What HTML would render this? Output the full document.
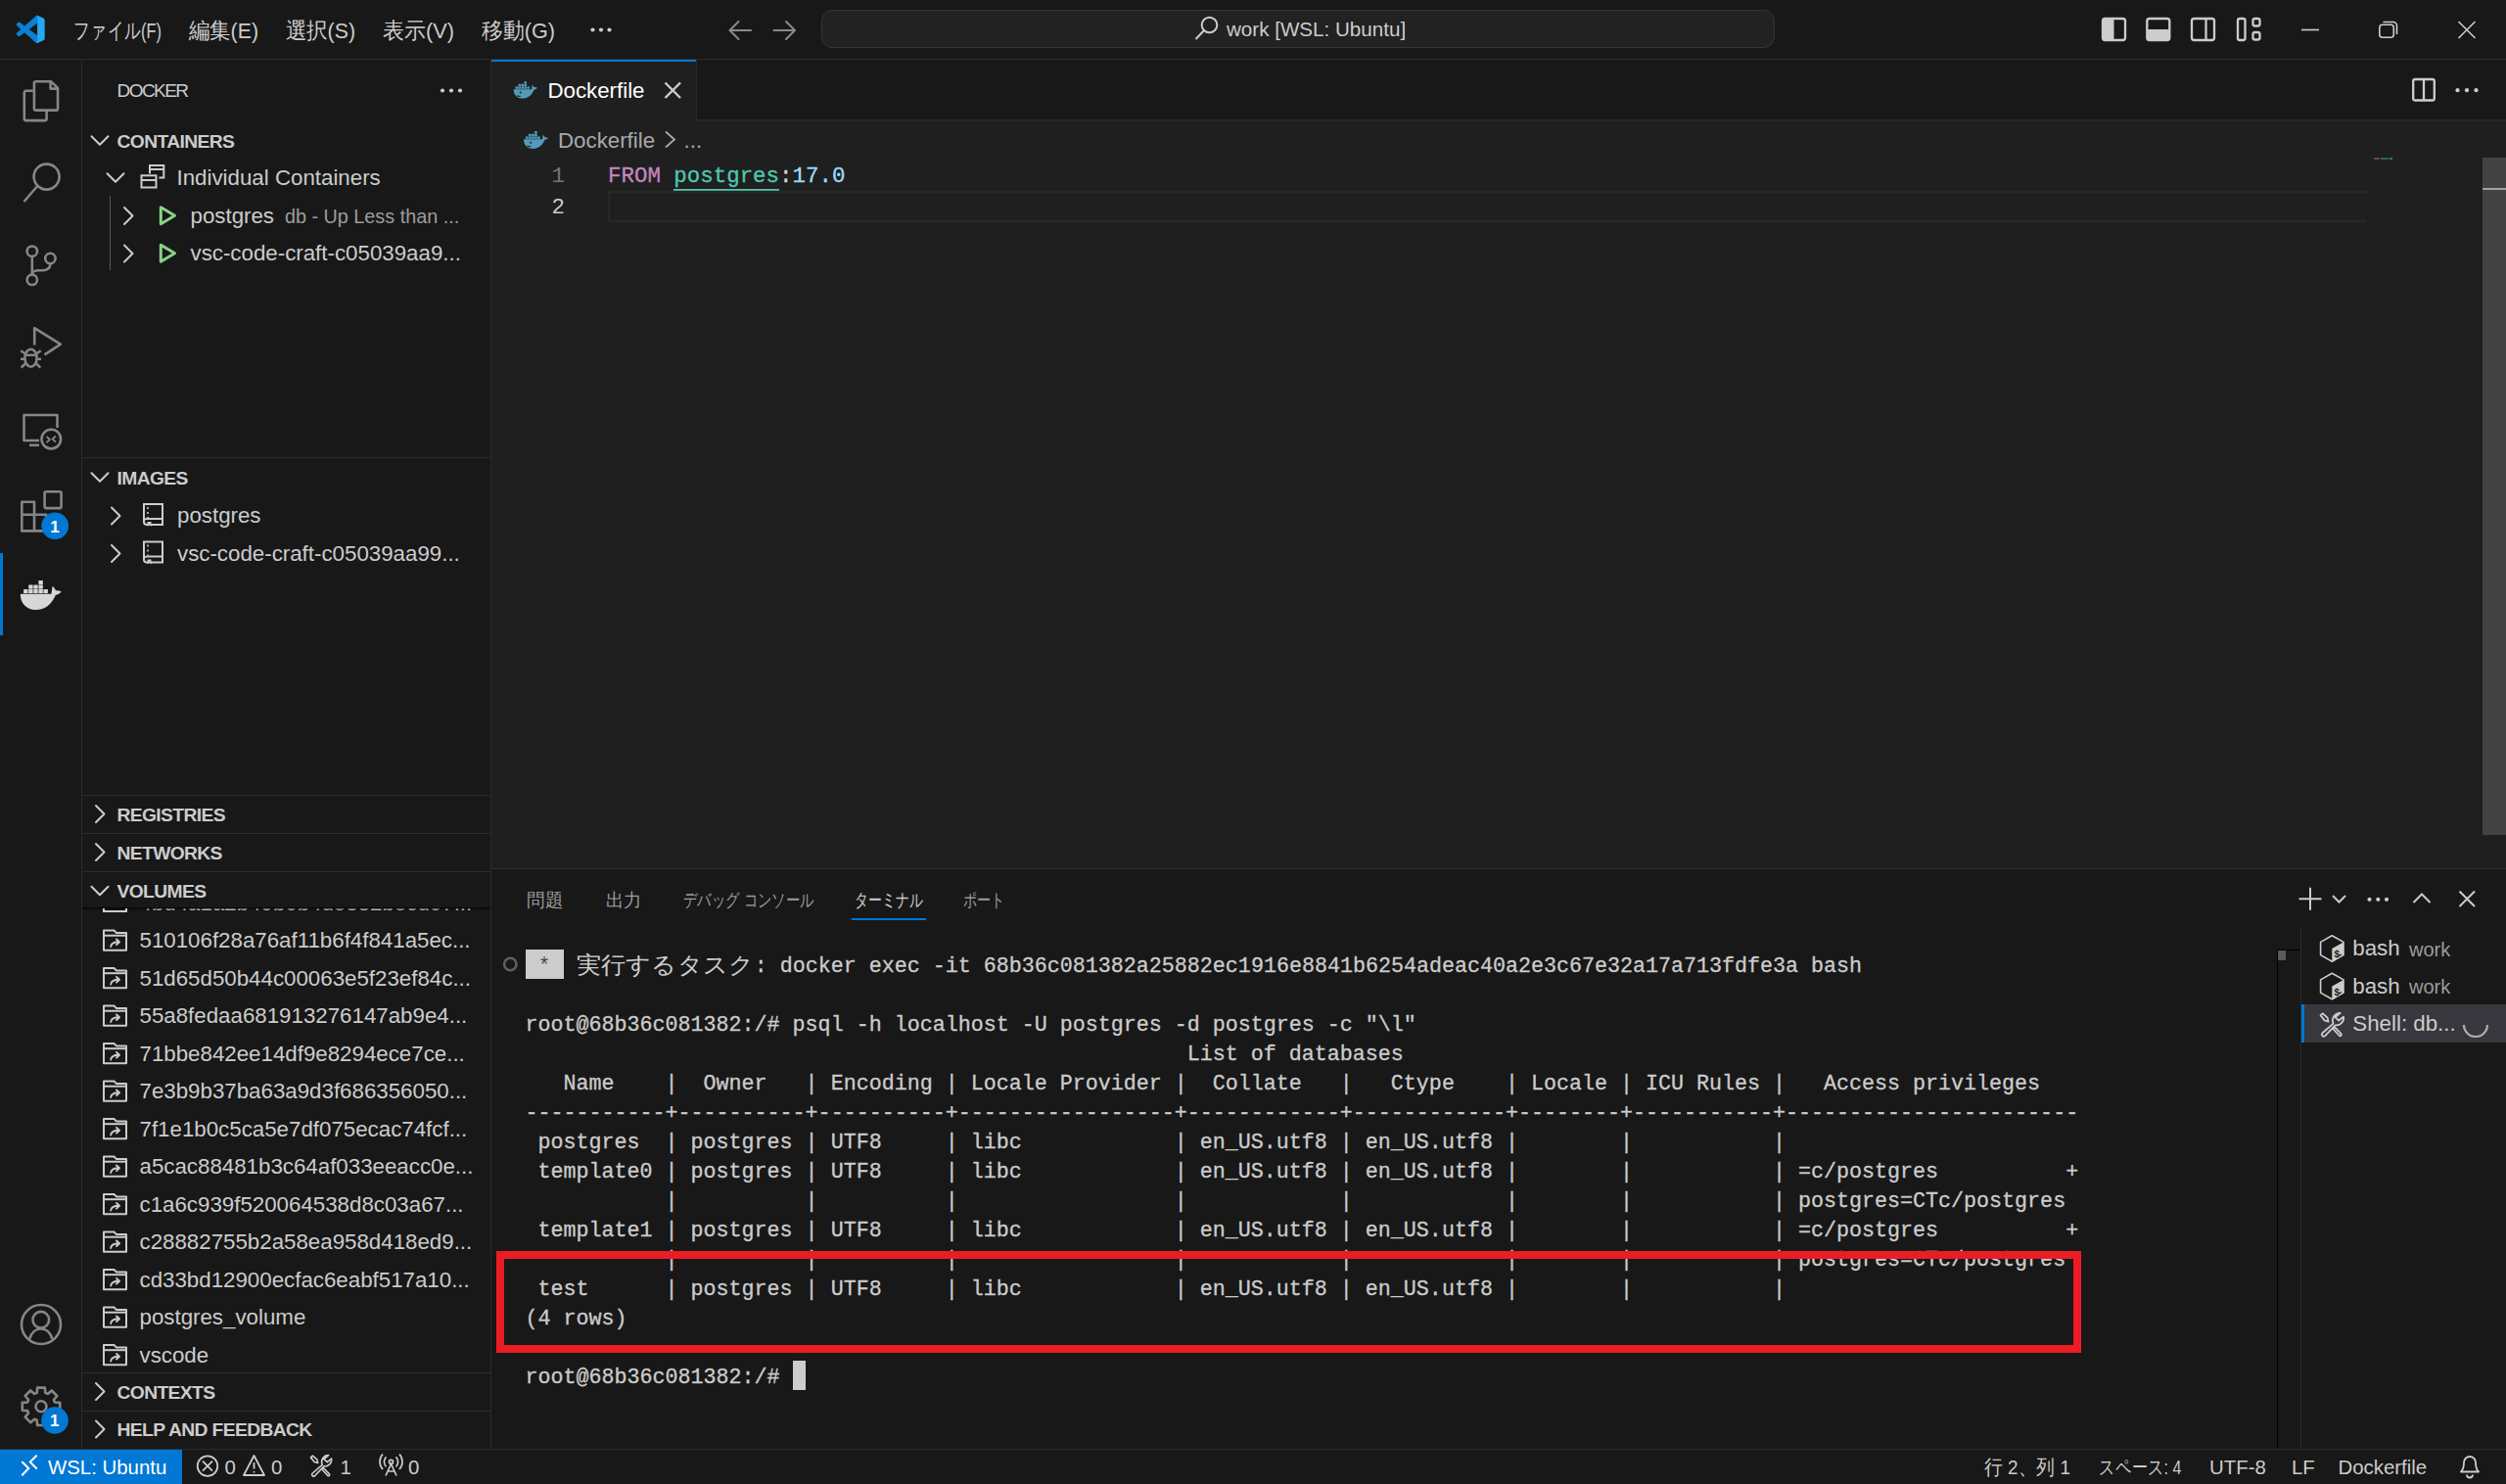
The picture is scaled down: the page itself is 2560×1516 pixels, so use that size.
<!DOCTYPE html><html><head><meta charset="utf-8"><title>VS Code</title><style>
*{margin:0;padding:0;box-sizing:border-box}
html,body{width:2560px;height:1516px;overflow:hidden;background:#181818;font-family:'Liberation Sans', sans-serif}
body>div,#wrap>div{position:absolute}
.t{position:absolute;white-space:pre}
.tm{font-family:'Liberation Mono', monospace;font-size:21.68px;line-height:30px;height:30px;color:#cccccc;-webkit-text-stroke:0.3px #cccccc}
#wrap div{position:absolute}
</style></head><body><div id="wrap"><div style="left:0px;top:0px;width:2560px;height:60px;background:#181818;"></div>
<div style="left:0px;top:60px;width:2560px;height:1px;background:#2b2b2b;"></div>
<div style="left:0px;top:61px;width:83px;height:1419px;background:#181818;"></div>
<div style="left:83px;top:61px;width:1px;height:1419px;background:#2b2b2b;"></div>
<div style="left:84px;top:61px;width:417px;height:1419px;background:#181818;"></div>
<div style="left:501px;top:61px;width:1px;height:1419px;background:#2b2b2b;"></div>
<div style="left:502px;top:61px;width:2058px;height:61px;background:#181818;"></div>
<div style="left:502px;top:122px;width:2058px;height:1px;background:#2b2b2b;"></div>
<div style="left:502px;top:61px;width:209px;height:62px;background:#1f1f1f;"></div>
<div style="left:502px;top:61px;width:209px;height:2px;background:#0078d4;"></div>
<div style="left:711px;top:61px;width:1px;height:61px;background:#2b2b2b;"></div>
<div style="left:502px;top:123px;width:2058px;height:764px;background:#1f1f1f;"></div>
<div style="left:502px;top:887px;width:2058px;height:1px;background:#2b2b2b;"></div>
<div style="left:502px;top:888px;width:2058px;height:592px;background:#181818;"></div>
<div style="left:0px;top:1480px;width:2560px;height:1px;background:#2b2b2b;"></div>
<div style="left:0px;top:1481px;width:2560px;height:35px;background:#181818;"></div>
<div style="left:0px;top:1481px;width:186px;height:35px;background:#0078d4;"></div>
<div style="left:839px;top:10px;width:974px;height:39px;background:#222222;border:1.5px solid #363636;border-radius:11px"></div>
<div class="t" style="left:1253px;top:16.44px;font-size:20.6px;line-height:28.84px;color:#cccccc;font-family:'Liberation Sans', sans-serif;">work [WSL: Ubuntu]</div>
<div style="left:0px;top:565px;width:3px;height:84px;background:#0078d4;"></div>
<div class="t" style="left:119.5px;top:79.72px;font-size:19px;line-height:26.6px;color:#cccccc;font-family:'Liberation Sans', sans-serif;letter-spacing:-1.55px;">DOCKER</div>
<div class="t" style="left:119.5px;top:131.65px;font-size:19.25px;line-height:26.95px;color:#cccccc;font-family:'Liberation Sans', sans-serif;font-weight:700;letter-spacing:-0.62px;">CONTAINERS</div>
<div class="t" style="left:180.5px;top:165.96px;font-size:22.3px;line-height:31.22px;color:#cccccc;font-family:'Liberation Sans', sans-serif;">Individual Containers</div>
<div style="left:112px;top:200px;width:1px;height:76px;background:#585858;"></div>
<div class="t" style="left:194.5px;top:204.96px;font-size:22.3px;line-height:31.22px;color:#cccccc;font-family:'Liberation Sans', sans-serif;">postgres</div>
<div class="t" style="left:291px;top:207.58px;font-size:19.8px;line-height:27.72px;color:#9d9d9d;font-family:'Liberation Sans', sans-serif;">db - Up Less than ...</div>
<div class="t" style="left:194.5px;top:243.46px;font-size:22.3px;line-height:31.22px;color:#cccccc;font-family:'Liberation Sans', sans-serif;">vsc-code-craft-c05039aa9...</div>
<div style="left:84px;top:467px;width:417px;height:1px;background:#2b2b2b;"></div>
<div class="t" style="left:119.5px;top:475.65px;font-size:19.25px;line-height:26.95px;color:#cccccc;font-family:'Liberation Sans', sans-serif;font-weight:700;letter-spacing:-0.62px;">IMAGES</div>
<div class="t" style="left:181px;top:511.46px;font-size:22.3px;line-height:31.22px;color:#cccccc;font-family:'Liberation Sans', sans-serif;">postgres</div>
<div class="t" style="left:181px;top:549.96px;font-size:22.3px;line-height:31.22px;color:#cccccc;font-family:'Liberation Sans', sans-serif;">vsc-code-craft-c05039aa99...</div>
<div style="left:84px;top:812px;width:417px;height:1px;background:#2b2b2b;"></div>
<div class="t" style="left:119.5px;top:819.65px;font-size:19.25px;line-height:26.95px;color:#cccccc;font-family:'Liberation Sans', sans-serif;font-weight:700;letter-spacing:-0.62px;">REGISTRIES</div>
<div style="left:84px;top:851px;width:417px;height:1px;background:#2b2b2b;"></div>
<div class="t" style="left:119.5px;top:858.65px;font-size:19.25px;line-height:26.95px;color:#cccccc;font-family:'Liberation Sans', sans-serif;font-weight:700;letter-spacing:-0.62px;">NETWORKS</div>
<div style="left:84px;top:889.5px;width:417px;height:1px;background:#2b2b2b;"></div>
<div style="left:84px;top:927.5px;width:417px;height:474.5px;overflow:hidden">
<div class="t" style="left:58.5px;top:-20.53px;font-size:22.3px;line-height:31.2px;color:#cccccc">4bd4a1a2b49b0b4d5832b5cd07...</div>
<div class="t" style="left:58.5px;top:17.97px;font-size:22.3px;line-height:31.2px;color:#cccccc">510106f28a76af11b6f4f841a5ec...</div>
<div class="t" style="left:58.5px;top:56.47px;font-size:22.3px;line-height:31.2px;color:#cccccc">51d65d50b44c00063e5f23ef84c...</div>
<div class="t" style="left:58.5px;top:94.97px;font-size:22.3px;line-height:31.2px;color:#cccccc">55a8fedaa681913276147ab9e4...</div>
<div class="t" style="left:58.5px;top:133.47px;font-size:22.3px;line-height:31.2px;color:#cccccc">71bbe842ee14df9e8294ece7ce...</div>
<div class="t" style="left:58.5px;top:171.97px;font-size:22.3px;line-height:31.2px;color:#cccccc">7e3b9b37ba63a9d3f686356050...</div>
<div class="t" style="left:58.5px;top:210.47px;font-size:22.3px;line-height:31.2px;color:#cccccc">7f1e1b0c5ca5e7df075ecac74fcf...</div>
<div class="t" style="left:58.5px;top:248.97px;font-size:22.3px;line-height:31.2px;color:#cccccc">a5cac88481b3c64af033eeacc0e...</div>
<div class="t" style="left:58.5px;top:287.47px;font-size:22.3px;line-height:31.2px;color:#cccccc">c1a6c939f520064538d8c03a67...</div>
<div class="t" style="left:58.5px;top:325.97px;font-size:22.3px;line-height:31.2px;color:#cccccc">c28882755b2a58ea958d418ed9...</div>
<div class="t" style="left:58.5px;top:364.47px;font-size:22.3px;line-height:31.2px;color:#cccccc">cd33bd12900ecfac6eabf517a10...</div>
<div class="t" style="left:58.5px;top:402.97px;font-size:22.3px;line-height:31.2px;color:#cccccc">postgres_volume</div>
<div class="t" style="left:58.5px;top:441.47px;font-size:22.3px;line-height:31.2px;color:#cccccc">vscode</div>
</div>
<div style="left:84px;top:890.5px;width:417px;height:37px;background:#181818;"></div>
<div class="t" style="left:119.5px;top:898.15px;font-size:19.25px;line-height:26.95px;color:#cccccc;font-family:'Liberation Sans', sans-serif;font-weight:700;letter-spacing:-0.62px;">VOLUMES</div>
<div style="left:84px;top:927px;width:417px;height:3px;background:linear-gradient(#000000cc,#00000000);"></div>
<div style="left:84px;top:1402px;width:417px;height:1px;background:#2b2b2b;"></div>
<div class="t" style="left:119.5px;top:1409.65px;font-size:19.25px;line-height:26.95px;color:#cccccc;font-family:'Liberation Sans', sans-serif;font-weight:700;letter-spacing:-0.62px;">CONTEXTS</div>
<div style="left:84px;top:1440.5px;width:417px;height:1px;background:#2b2b2b;"></div>
<div class="t" style="left:119.5px;top:1448.15px;font-size:19.25px;line-height:26.95px;color:#cccccc;font-family:'Liberation Sans', sans-serif;font-weight:700;letter-spacing:-0.62px;">HELP AND FEEDBACK</div>
<div class="t" style="left:559.4px;top:77.36px;font-size:22.3px;line-height:31.22px;color:#ffffff;font-family:'Liberation Sans', sans-serif;">Dockerfile</div>
<div class="t" style="left:570px;top:127.66px;font-size:22.3px;line-height:31.22px;color:#a9a9a9;font-family:'Liberation Sans', sans-serif;">Dockerfile</div>
<div class="t" style="left:698.5px;top:127.66px;font-size:22.3px;line-height:31.22px;color:#a9a9a9;font-family:'Liberation Sans', sans-serif;">...</div>
<div class="t" style="left:563.5px;top:164.61px;font-size:22.45px;line-height:31.43px;color:#6e7681;font-family:'Liberation Mono', monospace;">1</div>
<div class="t" style="left:563.5px;top:197.11px;font-size:22.45px;line-height:31.43px;color:#cccccc;font-family:'Liberation Mono', monospace;">2</div>
<div class="t" style="left:621px;top:164.61px;font-family:'Liberation Mono', monospace;font-size:22.45px;line-height:31.43px;white-space:pre;-webkit-text-stroke:0.3px currentColor"><span style="color:#c586c0;-webkit-text-stroke:0.3px #c586c0">FROM</span> <span style="color:#4ec9b0;-webkit-text-stroke:0.3px #4ec9b0">postgres</span><span style="color:#d4d4d4;-webkit-text-stroke:0.3px #d4d4d4">:</span><span style="color:#9cdcfe;-webkit-text-stroke:0.3px #9cdcfe">17.0</span></div>
<div style="left:688.3px;top:193px;width:107.8px;height:2.2px;background:#4ec9b0;"></div>
<div style="left:2425px;top:161px;width:6px;height:1.5px;background:#c586c066;"></div>
<div style="left:2432px;top:161px;width:8px;height:1.5px;background:#4ec9b066;"></div>
<div style="left:2441px;top:161px;width:3px;height:1.5px;background:#9cdcfe66;"></div>
<div style="left:2536px;top:161px;width:24px;height:692px;background:#434343;"></div>
<div style="left:2536px;top:192px;width:24px;height:2px;background:#a0a0a0;"></div>
<div style="left:870px;top:937.5px;width:76px;height:2px;background:#0078d4;"></div>
<div style="left:2350px;top:948px;width:1px;height:532px;background:#2b2b2b;"></div>
<div style="left:2351px;top:1026px;width:209px;height:38.5px;background:#37373d;"></div>
<div style="left:2351px;top:1026px;width:3px;height:38.5px;background:#0078d4;"></div>
<div class="t" style="left:2403.3px;top:953.46px;font-size:22.3px;line-height:31.22px;color:#cccccc;font-family:'Liberation Sans', sans-serif;">bash</div>
<div class="t" style="left:2461px;top:955.87px;font-size:20px;line-height:28.0px;color:#9d9d9d;font-family:'Liberation Sans', sans-serif;">work</div>
<div class="t" style="left:2403.3px;top:991.96px;font-size:22.3px;line-height:31.22px;color:#cccccc;font-family:'Liberation Sans', sans-serif;">bash</div>
<div class="t" style="left:2461px;top:994.37px;font-size:20px;line-height:28.0px;color:#9d9d9d;font-family:'Liberation Sans', sans-serif;">work</div>
<div class="t" style="left:2403.3px;top:1029.96px;font-size:22.3px;line-height:31.22px;color:#cccccc;font-family:'Liberation Sans', sans-serif;">Shell: db...</div>
<div style="left:2326px;top:970px;width:1px;height:510px;background:#000000;"></div>
<div style="left:2326px;top:970px;width:24px;height:1px;background:#000000;"></div>
<div style="left:2327px;top:971px;width:8px;height:10px;background:#5a5a5a;"></div>
<div class="t tm" style="left:536.5px;top:1032.5px">root@68b36c081382:/# psql -h localhost -U postgres -d postgres -c "\l"</div>
<div class="t tm" style="left:536.5px;top:1062.5px">                                                    List of databases</div>
<div class="t tm" style="left:536.5px;top:1092.5px">   Name    |  Owner   | Encoding | Locale Provider |  Collate   |   Ctype    | Locale | ICU Rules |   Access privileges   </div>
<div class="t tm" style="left:536.5px;top:1122.5px">-----------+----------+----------+-----------------+------------+------------+--------+-----------+-----------------------</div>
<div class="t tm" style="left:536.5px;top:1152.5px"> postgres  | postgres | UTF8     | libc            | en_US.utf8 | en_US.utf8 |        |           | </div>
<div class="t tm" style="left:536.5px;top:1182.5px"> template0 | postgres | UTF8     | libc            | en_US.utf8 | en_US.utf8 |        |           | =c/postgres          +</div>
<div class="t tm" style="left:536.5px;top:1212.5px">           |          |          |                 |            |            |        |           | postgres=CTc/postgres</div>
<div class="t tm" style="left:536.5px;top:1242.5px"> template1 | postgres | UTF8     | libc            | en_US.utf8 | en_US.utf8 |        |           | =c/postgres          +</div>
<div class="t tm" style="left:536.5px;top:1272.5px">           |          |          |                 |            |            |        |           | postgres=CTc/postgres</div>
<div class="t tm" style="left:536.5px;top:1302.5px"> test      | postgres | UTF8     | libc            | en_US.utf8 | en_US.utf8 |        |           | </div>
<div class="t tm" style="left:536.5px;top:1332.5px">(4 rows)</div>
<div class="t tm" style="left:536.5px;top:1392.5px">root@68b36c081382:/# </div>
<div style="left:536.5px;top:970px;width:39px;height:30px;background:#cccccc;"></div>
<div class="t tm" style="left:549.51px;top:972.5px;color:#1f1f1f">*</div>
<div class="t tm" style="left:770.6800000000001px;top:972.5px">: docker exec -it 68b36c081382a25882ec1916e8841b6254adeac40a2e3c67e32a17a713fdfe3a bash</div>
<div style="left:809.7px;top:1389.5px;width:13.6px;height:30px;background:#cccccc;"></div>
<div style="left:507px;top:1277.5px;width:1619px;height:104.5px;border:8.3px solid #ec1c24;box-sizing:border-box"></div>
<div class="t" style="left:49px;top:1484.95px;font-size:20.4px;line-height:28.56px;color:#ffffff;font-family:'Liberation Sans', sans-serif;">WSL: Ubuntu</div>
<div class="t" style="left:229.5px;top:1484.95px;font-size:20.4px;line-height:28.56px;color:#cccccc;font-family:'Liberation Sans', sans-serif;">0</div>
<div class="t" style="left:277px;top:1484.95px;font-size:20.4px;line-height:28.56px;color:#cccccc;font-family:'Liberation Sans', sans-serif;">0</div>
<div class="t" style="left:347.5px;top:1484.95px;font-size:20.4px;line-height:28.56px;color:#cccccc;font-family:'Liberation Sans', sans-serif;">1</div>
<div class="t" style="left:417px;top:1484.95px;font-size:20.4px;line-height:28.56px;color:#cccccc;font-family:'Liberation Sans', sans-serif;">0</div>
<div class="t" style="left:2257px;top:1484.95px;font-size:20.4px;line-height:28.56px;color:#cccccc;font-family:'Liberation Sans', sans-serif;">UTF-8</div>
<div class="t" style="left:2341px;top:1484.95px;font-size:20.4px;line-height:28.56px;color:#cccccc;font-family:'Liberation Sans', sans-serif;">LF</div>
<div class="t" style="left:2388.5px;top:1484.95px;font-size:20.4px;line-height:28.56px;color:#cccccc;font-family:'Liberation Sans', sans-serif;">Dockerfile</div></div><svg width="2560" height="1516" viewBox="0 0 2560 1516" style="position:absolute;left:0;top:0;pointer-events:none"><g transform="translate(16.6,15.8) scale(0.289,0.282)"><path fill="#0b80d4" d="M96.46 10.8L75.86.9a6.24 6.24 0 0 0-7.12 1.21L29.35 38.04 12.19 25.01a4.16 4.16 0 0 0-5.32.24l-5.5 5a4.16 4.16 0 0 0 0 6.16L16.25 50 1.37 63.58a4.16 4.16 0 0 0 0 6.16l5.5 5a4.16 4.16 0 0 0 5.32.24l17.16-13.02 39.39 35.93a6.24 6.24 0 0 0 7.12 1.21l20.6-9.92A6.25 6.25 0 0 0 100 83.6V16.4a6.25 6.25 0 0 0-3.54-5.6zM75.02 72.7L45.11 50l29.91-22.7z"/><path fill="#27a9f1" d="M75.86 99.13a6.24 6.24 0 0 1-7.12-1.21c2.31 2.31 6.26.67 6.26-2.6V4.68c0-3.27-3.95-4.91-6.26-2.6a6.24 6.24 0 0 1 7.12-1.21l20.6 9.91A6.25 6.25 0 0 1 100 16.4v67.2a6.25 6.25 0 0 1-3.54 5.63z"/></g>
<text x="75" y="38.5" font-family="'Liberation Sans', sans-serif" font-size="22.75" fill="#cccccc" font-weight="400" textLength="90" lengthAdjust="spacingAndGlyphs" xml:space="preserve">ファイル(F)</text>
<text x="192.5" y="38.5" font-family="'Liberation Sans', sans-serif" font-size="22.75" fill="#cccccc" font-weight="400" textLength="71.5" lengthAdjust="spacingAndGlyphs" xml:space="preserve">編集(E)</text>
<text x="291.5" y="38.5" font-family="'Liberation Sans', sans-serif" font-size="22.75" fill="#cccccc" font-weight="400" textLength="71.5" lengthAdjust="spacingAndGlyphs" xml:space="preserve">選択(S)</text>
<text x="391" y="38.5" font-family="'Liberation Sans', sans-serif" font-size="22.75" fill="#cccccc" font-weight="400" textLength="73" lengthAdjust="spacingAndGlyphs" xml:space="preserve">表示(V)</text>
<text x="492" y="38.5" font-family="'Liberation Sans', sans-serif" font-size="22.75" fill="#cccccc" font-weight="400" textLength="75" lengthAdjust="spacingAndGlyphs" xml:space="preserve">移動(G)</text>
<circle cx="605.5" cy="30.5" r="2.1" fill="#cccccc"/>
<circle cx="614" cy="30.5" r="2.1" fill="#cccccc"/>
<circle cx="622.5" cy="30.5" r="2.1" fill="#cccccc"/>
<g stroke="#8a8a8a" stroke-width="2" fill="none" stroke-linecap="round"><path d="M745.5 31H767M745.5 31L754.5 22M745.5 31L754.5 40"/><path d="M812 31H790.5M812 31L803 22M812 31L803 40"/></g>
<g stroke="#cccccc" stroke-width="2" fill="none"><circle cx="1235.5" cy="25.5" r="7.8"/><path d="M1229.8 31.2L1221.5 40"/></g>
<g stroke="#cccccc" stroke-width="2.3" fill="none"><rect x="2148" y="19" width="23" height="22" rx="2.5"/><rect x="2193.3" y="19" width="23" height="22" rx="2.5"/><rect x="2239" y="19" width="23" height="22" rx="2.5"/><path d="M2253.5 19V41"/><rect x="2286" y="19" width="7.5" height="22" rx="2"/><rect x="2301.5" y="19" width="7" height="7.5" rx="2"/><rect x="2301.5" y="33" width="7" height="7.5" rx="2"/></g>
<rect x="2148" y="19" width="11.5" height="22" rx="2" fill="#cccccc"/>
<rect x="2193.3" y="30" width="23" height="11" rx="2" fill="#cccccc"/>
<g stroke="#cccccc" stroke-width="1.6" fill="none"><path d="M2351 30.5H2369"/><rect x="2430.8" y="25.3" width="14.5" height="13" rx="3"/><path d="M2434.5 22.5H2444.5A4 4 0 0 1 2448.5 26.5V35"/><path d="M2511.5 22L2528.5 39M2528.5 22L2511.5 39"/></g>
<g stroke="#868686" stroke-width="2.6" fill="none" stroke-linejoin="round"><path d="M33.8 92.8H26.3A2.2 2.2 0 0 0 24.8 94.8V121.7A1.6 1.6 0 0 0 26.6 123.1H46.1A1.6 1.6 0 0 0 47.6 121.6V114"/><path d="M36.7 83.3H52.3L59 90V110.9A1.7 1.7 0 0 1 57.4 112.6H36.6A1.7 1.7 0 0 1 34.9 110.9V85A1.7 1.7 0 0 1 36.7 83.3Z"/><path d="M51.6 83.5V90.6H58.8"/></g>
<g stroke="#868686" stroke-width="2.6" fill="none" stroke-linejoin="round"><circle cx="47.6" cy="180.6" r="13"/><path d="M38.3 190L24.5 206"/></g>
<g stroke="#868686" stroke-width="2.6" fill="none" stroke-linejoin="round"><circle cx="32.8" cy="256.7" r="5.2"/><circle cx="51.4" cy="264" r="5.2"/><circle cx="32.8" cy="285.8" r="5.2"/><path d="M32.8 262V280.5M51.4 269.3C51.4 274 49 276 44 276.3H39C35 276.5 32.8 278 32.8 280.5"/></g>
<g stroke="#868686" stroke-width="2.6" fill="none" stroke-linejoin="round"><path d="M35.2 352.5V335.2L61.8 351.7L45.5 362.3"/><ellipse cx="31.5" cy="365.7" rx="6.1" ry="9"/><path d="M25.6 362.8H37.4M21.3 358.3L26 361.5M41.7 358.3L37 361.5M21 366.8H25.4M37.6 366.8H42M21.6 375.5L26 371.5M41.4 375.5L37 371.5" stroke-width="2.4"/></g>
<g stroke="#868686" stroke-width="2.6" fill="none" stroke-linejoin="round"><path d="M40 450H24.5V424H58.5V437"/><path d="M30 454.8H40"/><circle cx="52.3" cy="448.6" r="9.8"/><path d="M47.5 446L51 449L47.5 452M57 445.5L53.5 448.5L57 451.5" stroke-width="1.8"/></g>
<g stroke="#868686" stroke-width="2.6" fill="none" stroke-linejoin="round"><path d="M22.3 512.8H35V525.8H47.2V542.4H22.3Z"/><path d="M22.3 525.8H35V542.4"/><rect x="45.6" y="502.3" width="17" height="16.8" rx="1.5"/></g>
<circle cx="56.2" cy="537.2" r="13.8" fill="#0078d4"/>
<text x="51.2" y="543.6" font-family="'Liberation Sans', sans-serif" font-size="17" fill="#ffffff" font-weight="700" textLength="9.5" lengthAdjust="spacingAndGlyphs" xml:space="preserve">1</text>
<g transform="translate(20.9,593) scale(1.0)" fill="#d7d7d7"><path d="M0 13.7H31.5C32.1 11 32.3 8 32.8 5.8C34.6 7.5 35.6 9 36.2 10.3C38.1 10 40.1 10.5 41.8 11.5C40.1 13.5 38.1 14.5 36 14.7C32.1 24 25.1 30 15.4 30C6.1 30 0.1 23 0 15Z"/><rect x="3.2" y="9" width="4.4" height="4.1"/><rect x="8.3" y="9" width="4.4" height="4.1"/><rect x="13.4" y="9" width="4.4" height="4.1"/><rect x="18.5" y="9" width="4.4" height="4.1"/><rect x="23.6" y="9" width="4.4" height="4.1"/><rect x="8.3" y="4.5" width="4.4" height="4.1"/><rect x="13.4" y="4.5" width="4.4" height="4.1"/><rect x="18.5" y="4.5" width="4.4" height="4.1"/><rect x="18.5" y="0" width="4.4" height="4.1"/></g>
<g stroke="#868686" stroke-width="2.6" fill="none" stroke-linejoin="round"><circle cx="42" cy="1353" r="20"/><circle cx="41.8" cy="1348.2" r="8.3"/><path d="M30.2 1367.8C32 1361.5 36.5 1357.5 41.8 1357.5S51.5 1361.5 53.4 1367.8"/></g>
<g stroke="#868686" stroke-width="2.6" fill="none" stroke-linejoin="round"><path d="M61.21 1432.91 L61.21 1440.69 L55.95 1441.11 L54.91 1443.61 L58.34 1447.63 L52.83 1453.14 L48.81 1449.71 L46.31 1450.75 L45.89 1456.01 L38.11 1456.01 L37.69 1450.75 L35.19 1449.71 L31.17 1453.14 L25.66 1447.63 L29.09 1443.61 L28.05 1441.11 L22.79 1440.69 L22.79 1432.91 L28.05 1432.49 L29.09 1429.99 L25.66 1425.97 L31.17 1420.46 L35.19 1423.89 L37.69 1422.85 L38.11 1417.59 L45.89 1417.59 L46.31 1422.85 L48.81 1423.89 L52.83 1420.46 L58.34 1425.97 L54.91 1429.99 L55.95 1432.49Z"/><circle cx="42" cy="1436.8" r="5.5"/></g>
<circle cx="56" cy="1451" r="13.8" fill="#0078d4"/>
<text x="51" y="1457.4" font-family="'Liberation Sans', sans-serif" font-size="17" fill="#ffffff" font-weight="700" textLength="9.5" lengthAdjust="spacingAndGlyphs" xml:space="preserve">1</text>
<circle cx="452" cy="92.5" r="2.1" fill="#cccccc"/>
<circle cx="461" cy="92.5" r="2.1" fill="#cccccc"/>
<circle cx="470" cy="92.5" r="2.1" fill="#cccccc"/>
<path stroke="#cccccc" stroke-width="2" fill="none" stroke-linecap="round" stroke-linejoin="round" d="M93.5 139.2L102.0 147.8L110.5 139.2"/>
<path stroke="#cccccc" stroke-width="2" fill="none" stroke-linecap="round" stroke-linejoin="round" d="M109.5 177.2L118.0 185.8L126.5 177.2"/>
<g stroke="#cccccc" stroke-width="2" fill="none"><rect x="144.5" y="179.3" width="15" height="12.2"/><path d="M144.5 184H159.5"/><path d="M153 177.5V169H167.3V181.5H162.5M153 173H167.3"/></g>
<path stroke="#cccccc" stroke-width="2" fill="none" stroke-linecap="round" stroke-linejoin="round" d="M127 212.0L135.5 220.5L127 229.0"/>
<path d="M164.3 211.7L178.5 220.2L164.3 228.7Z" stroke="#89d185" stroke-width="3" fill="none" stroke-linejoin="round"/>
<path stroke="#cccccc" stroke-width="2" fill="none" stroke-linecap="round" stroke-linejoin="round" d="M127 250.5L135.5 259L127 267.5"/>
<path d="M164.3 250.2L178.5 258.7L164.3 267.2Z" stroke="#89d185" stroke-width="3" fill="none" stroke-linejoin="round"/>
<path stroke="#cccccc" stroke-width="2" fill="none" stroke-linecap="round" stroke-linejoin="round" d="M93.5 483.2L102.0 491.8L110.5 483.2"/>
<path stroke="#cccccc" stroke-width="2" fill="none" stroke-linecap="round" stroke-linejoin="round" d="M114 518.5L122.5 527L114 535.5"/>
<g stroke="#cccccc" stroke-width="2" fill="none"><path d="M147 515H166V536H150A3 3 0 0 1 147 533Z"/><path d="M147 532A3 3 0 0 1 150 530H166"/><path d="M151 518V520M151 523V525M151 528V529" stroke-width="1.6"/></g>
<path d="M150.5 533V538L152.5 536L154.5 538V533Z" fill="#cccccc"/>
<path stroke="#cccccc" stroke-width="2" fill="none" stroke-linecap="round" stroke-linejoin="round" d="M114 557.0L122.5 565.5L114 574.0"/>
<g stroke="#cccccc" stroke-width="2" fill="none"><path d="M147 553.5H166V574.5H150A3 3 0 0 1 147 571.5Z"/><path d="M147 570.5A3 3 0 0 1 150 568.5H166"/><path d="M151 556.5V558.5M151 561.5V563.5M151 566.5V567.5" stroke-width="1.6"/></g>
<path d="M150.5 571.5V576.5L152.5 574.5L154.5 576.5V571.5Z" fill="#cccccc"/>
<path stroke="#cccccc" stroke-width="2" fill="none" stroke-linecap="round" stroke-linejoin="round" d="M98 823.0L106.5 831.5L98 840.0"/>
<path stroke="#cccccc" stroke-width="2" fill="none" stroke-linecap="round" stroke-linejoin="round" d="M98 862.0L106.5 870.5L98 879.0"/>
<g stroke="#cccccc" stroke-width="2" fill="none" stroke-linejoin="round"><path d="M106 970.7V950.5H116.5L119 953.1H129V970.7Z"/><path d="M106 955.7H129"/><path d="M113.2 967.0C113.5 963.5 116 962.3 121.5 962.3M119 959.5L122 962.3L119 965.1" stroke-width="1.9" stroke-linecap="round"/></g>
<g stroke="#cccccc" stroke-width="2" fill="none" stroke-linejoin="round"><path d="M106 1009.2V989.0H116.5L119 991.6H129V1009.2Z"/><path d="M106 994.2H129"/><path d="M113.2 1005.5C113.5 1002.0 116 1000.8 121.5 1000.8M119 998.0L122 1000.8L119 1003.6" stroke-width="1.9" stroke-linecap="round"/></g>
<g stroke="#cccccc" stroke-width="2" fill="none" stroke-linejoin="round"><path d="M106 1047.7V1027.5H116.5L119 1030.1H129V1047.7Z"/><path d="M106 1032.7H129"/><path d="M113.2 1044.0C113.5 1040.5 116 1039.3 121.5 1039.3M119 1036.5L122 1039.3L119 1042.1" stroke-width="1.9" stroke-linecap="round"/></g>
<g stroke="#cccccc" stroke-width="2" fill="none" stroke-linejoin="round"><path d="M106 1086.2V1066.0H116.5L119 1068.6H129V1086.2Z"/><path d="M106 1071.2H129"/><path d="M113.2 1082.5C113.5 1079.0 116 1077.8 121.5 1077.8M119 1075.0L122 1077.8L119 1080.6" stroke-width="1.9" stroke-linecap="round"/></g>
<g stroke="#cccccc" stroke-width="2" fill="none" stroke-linejoin="round"><path d="M106 1124.7V1104.5H116.5L119 1107.1H129V1124.7Z"/><path d="M106 1109.7H129"/><path d="M113.2 1121.0C113.5 1117.5 116 1116.3 121.5 1116.3M119 1113.5L122 1116.3L119 1119.1" stroke-width="1.9" stroke-linecap="round"/></g>
<g stroke="#cccccc" stroke-width="2" fill="none" stroke-linejoin="round"><path d="M106 1163.2V1143.0H116.5L119 1145.6H129V1163.2Z"/><path d="M106 1148.2H129"/><path d="M113.2 1159.5C113.5 1156.0 116 1154.8 121.5 1154.8M119 1152.0L122 1154.8L119 1157.6" stroke-width="1.9" stroke-linecap="round"/></g>
<g stroke="#cccccc" stroke-width="2" fill="none" stroke-linejoin="round"><path d="M106 1201.7V1181.5H116.5L119 1184.1H129V1201.7Z"/><path d="M106 1186.7H129"/><path d="M113.2 1198.0C113.5 1194.5 116 1193.3 121.5 1193.3M119 1190.5L122 1193.3L119 1196.1" stroke-width="1.9" stroke-linecap="round"/></g>
<g stroke="#cccccc" stroke-width="2" fill="none" stroke-linejoin="round"><path d="M106 1240.2V1220.0H116.5L119 1222.6H129V1240.2Z"/><path d="M106 1225.2H129"/><path d="M113.2 1236.5C113.5 1233.0 116 1231.8 121.5 1231.8M119 1229.0L122 1231.8L119 1234.6" stroke-width="1.9" stroke-linecap="round"/></g>
<g stroke="#cccccc" stroke-width="2" fill="none" stroke-linejoin="round"><path d="M106 1278.7V1258.5H116.5L119 1261.1H129V1278.7Z"/><path d="M106 1263.7H129"/><path d="M113.2 1275.0C113.5 1271.5 116 1270.3 121.5 1270.3M119 1267.5L122 1270.3L119 1273.1" stroke-width="1.9" stroke-linecap="round"/></g>
<g stroke="#cccccc" stroke-width="2" fill="none" stroke-linejoin="round"><path d="M106 1317.2V1297.0H116.5L119 1299.6H129V1317.2Z"/><path d="M106 1302.2H129"/><path d="M113.2 1313.5C113.5 1310.0 116 1308.8 121.5 1308.8M119 1306.0L122 1308.8L119 1311.6" stroke-width="1.9" stroke-linecap="round"/></g>
<g stroke="#cccccc" stroke-width="2" fill="none" stroke-linejoin="round"><path d="M106 1355.7V1335.5H116.5L119 1338.1H129V1355.7Z"/><path d="M106 1340.7H129"/><path d="M113.2 1352.0C113.5 1348.5 116 1347.3 121.5 1347.3M119 1344.5L122 1347.3L119 1350.1" stroke-width="1.9" stroke-linecap="round"/></g>
<g stroke="#cccccc" stroke-width="2" fill="none" stroke-linejoin="round"><path d="M106 1394.2V1374.0H116.5L119 1376.6H129V1394.2Z"/><path d="M106 1379.2H129"/><path d="M113.2 1390.5C113.5 1387.0 116 1385.8 121.5 1385.8M119 1383.0L122 1385.8L119 1388.6" stroke-width="1.9" stroke-linecap="round"/></g>
<g stroke="#cccccc" stroke-width="2" fill="none"><path d="M106 928V931H129V928"/></g>
<path stroke="#cccccc" stroke-width="2" fill="none" stroke-linecap="round" stroke-linejoin="round" d="M93.5 905.7L102.0 914.3L110.5 905.7"/>
<path stroke="#cccccc" stroke-width="2" fill="none" stroke-linecap="round" stroke-linejoin="round" d="M98 1413.0L106.5 1421.5L98 1430.0"/>
<path stroke="#cccccc" stroke-width="2" fill="none" stroke-linecap="round" stroke-linejoin="round" d="M98 1451.5L106.5 1460L98 1468.5"/>
<g transform="translate(524.7,83.2) scale(0.58)" fill="#519aba"><path d="M0 13.7H31.5C32.1 11 32.3 8 32.8 5.8C34.6 7.5 35.6 9 36.2 10.3C38.1 10 40.1 10.5 41.8 11.5C40.1 13.5 38.1 14.5 36 14.7C32.1 24 25.1 30 15.4 30C6.1 30 0.1 23 0 15Z"/><rect x="3.2" y="9" width="4.4" height="4.1"/><rect x="8.3" y="9" width="4.4" height="4.1"/><rect x="13.4" y="9" width="4.4" height="4.1"/><rect x="18.5" y="9" width="4.4" height="4.1"/><rect x="23.6" y="9" width="4.4" height="4.1"/><rect x="8.3" y="4.5" width="4.4" height="4.1"/><rect x="13.4" y="4.5" width="4.4" height="4.1"/><rect x="18.5" y="4.5" width="4.4" height="4.1"/><rect x="18.5" y="0" width="4.4" height="4.1"/><circle cx="12" cy="19.5" r="1.6" fill="#1f1f1f"/><path d="M5.5 25.5Q9 25 12 27" stroke="#1f1f1f" stroke-width="1.8" fill="none"/></g>
<path d="M679.5 84.5L695 100M695 84.5L679.5 100" stroke="#cccccc" stroke-width="2.4"/>
<g stroke="#cccccc" stroke-width="2.3" fill="none"><rect x="2465.2" y="81" width="21.6" height="21.5" rx="2"/><path d="M2476 81V102.5"/></g>
<circle cx="2510.5" cy="92.2" r="2.1" fill="#cccccc"/>
<circle cx="2520" cy="92.2" r="2.1" fill="#cccccc"/>
<circle cx="2529.5" cy="92.2" r="2.1" fill="#cccccc"/>
<g transform="translate(535,134) scale(0.6)" fill="#519aba"><path d="M0 13.7H31.5C32.1 11 32.3 8 32.8 5.8C34.6 7.5 35.6 9 36.2 10.3C38.1 10 40.1 10.5 41.8 11.5C40.1 13.5 38.1 14.5 36 14.7C32.1 24 25.1 30 15.4 30C6.1 30 0.1 23 0 15Z"/><rect x="3.2" y="9" width="4.4" height="4.1"/><rect x="8.3" y="9" width="4.4" height="4.1"/><rect x="13.4" y="9" width="4.4" height="4.1"/><rect x="18.5" y="9" width="4.4" height="4.1"/><rect x="23.6" y="9" width="4.4" height="4.1"/><rect x="8.3" y="4.5" width="4.4" height="4.1"/><rect x="13.4" y="4.5" width="4.4" height="4.1"/><rect x="18.5" y="4.5" width="4.4" height="4.1"/><rect x="18.5" y="0" width="4.4" height="4.1"/><circle cx="12" cy="19.5" r="1.6" fill="#1f1f1f"/><path d="M5.5 25.5Q9 25 12 27" stroke="#1f1f1f" stroke-width="1.8" fill="none"/></g>
<path d="M680 134.5L689 142.5L680 150.5" stroke="#a9a9a9" stroke-width="1.8" fill="none"/>
<path d="M2417 196H622V226H2417" fill="none" stroke="#282828" stroke-width="2.6"/>
<text x="538" y="926" font-family="'Liberation Sans', sans-serif" font-size="19.25" fill="#9d9d9d" font-weight="400" textLength="37" lengthAdjust="spacingAndGlyphs" xml:space="preserve">問題</text>
<text x="619" y="926" font-family="'Liberation Sans', sans-serif" font-size="19.25" fill="#9d9d9d" font-weight="400" textLength="36.5" lengthAdjust="spacingAndGlyphs" xml:space="preserve">出力</text>
<text x="698" y="926" font-family="'Liberation Sans', sans-serif" font-size="19.25" fill="#9d9d9d" font-weight="400" textLength="133.5" lengthAdjust="spacingAndGlyphs" xml:space="preserve">デバッグ コンソール</text>
<text x="873" y="926" font-family="'Liberation Sans', sans-serif" font-size="19.25" fill="#cccccc" font-weight="400" textLength="69.5" lengthAdjust="spacingAndGlyphs" xml:space="preserve">ターミナル</text>
<text x="984" y="926" font-family="'Liberation Sans', sans-serif" font-size="19.25" fill="#9d9d9d" font-weight="400" textLength="42.5" lengthAdjust="spacingAndGlyphs" xml:space="preserve">ポート</text>
<g stroke="#cccccc" stroke-width="2" fill="none"><path d="M2348.5 918.3H2371.5M2360 906.8V929.8"/><path d="M2383 915L2389.5 921.5L2396 915"/><path d="M2465.5 922L2474 913.5L2482.5 922"/><path d="M2512.5 910.5L2528 926M2528 910.5L2512.5 926"/></g>
<circle cx="2420.5" cy="918.8" r="2.1" fill="#cccccc"/>
<circle cx="2429.3" cy="918.8" r="2.1" fill="#cccccc"/>
<circle cx="2438" cy="918.8" r="2.1" fill="#cccccc"/>
<g stroke="#cccccc" stroke-width="1.6" fill="none" stroke-linejoin="round"><path d="M2382.3 955.7L2394 962.4V975.6L2382.3 982.3L2370.6 975.6V962.4Z"/></g>
<path d="M2394 962.4V975.6L2382.3 982.3V969Z" fill="#cccccc"/>
<text x="2384.3" y="978" font-family="'Liberation Mono', monospace" font-size="10" font-weight="700" fill="#181818">$</text><path d="M2389.5 976.5L2392 975" stroke="#181818" stroke-width="1.2"/>
<g stroke="#cccccc" stroke-width="1.6" fill="none" stroke-linejoin="round"><path d="M2382.3 994.2L2394 1000.9V1014.1L2382.3 1020.8L2370.6 1014.1V1000.9Z"/></g>
<path d="M2394 1000.9V1014.1L2382.3 1020.8V1007.5Z" fill="#cccccc"/>
<text x="2384.3" y="1016.5" font-family="'Liberation Mono', monospace" font-size="10" font-weight="700" fill="#181818">$</text><path d="M2389.5 1015.0L2392 1013.5" stroke="#181818" stroke-width="1.2"/>
<g transform="translate(2365,1028) scale(1.0)" stroke="#cccccc" stroke-width="1.8" fill="none" stroke-linejoin="round"><path d="M25.7 6.8A7.6 7.6 0 0 0 18.6 17.6L7.2 27.5A2 2 0 0 0 10 30.3L20.5 19.3A7.6 7.6 0 0 0 29 10.6L24.2 14.5L20.5 11.3Z"/><path d="M5.5 9.3L7.6 7.3L12.6 11.6L13.6 15.6L9.6 14.4Z"/><path d="M18.2 22.8L19.9 21.1L26.6 28.2A1.3 1.3 0 0 1 24.8 30Z"/></g>
<path d="M2517 1047A12 12 0 0 0 2541 1047" stroke="#b0b0b0" stroke-width="2.2" fill="none"/>
<circle cx="521.3" cy="985" r="6.2" stroke="#5f5f5f" stroke-width="2.6" fill="none"/>
<text x="589.04" y="993.5" font-family="'Liberation Sans', sans-serif" font-size="23.5" fill="#cccccc" font-weight="400" textLength="181.14" lengthAdjust="spacingAndGlyphs" xml:space="preserve">実行するタスク</text>
<g stroke="#ffffff" stroke-width="2" fill="none" stroke-linecap="square"><path d="M23 1493.8L29.3 1500L23 1506.5"/><path d="M37 1487.3L30.8 1493.6L37 1499.8"/></g>
<g stroke="#cccccc" stroke-width="1.8" fill="none"><circle cx="212" cy="1497.6" r="10.3"/><path d="M207 1492.6L217 1502.6M217 1492.6L207 1502.6"/><path d="M259.5 1487L270 1507H249Z" stroke-linejoin="round"/><path d="M259.5 1494V1500.5M259.5 1503V1504.5"/><path d="M399.5 1495.5L394 1507.5M399.5 1495.5L405 1507.5M396 1503H403" stroke-width="1.7"/><circle cx="399.5" cy="1493.3" r="2" stroke-width="1.7"/><path d="M394.5 1488.3A7 7 0 0 0 394.5 1498.3M404.5 1488.3A7 7 0 0 1 404.5 1498.3M391 1485.5A11.5 11.5 0 0 0 391 1501M408 1485.5A11.5 11.5 0 0 1 408 1501" stroke-width="1.7"/></g>
<g transform="translate(312.5,1480.5) scale(0.9)" stroke="#cccccc" stroke-width="1.8" fill="none" stroke-linejoin="round"><path d="M25.7 6.8A7.6 7.6 0 0 0 18.6 17.6L7.2 27.5A2 2 0 0 0 10 30.3L20.5 19.3A7.6 7.6 0 0 0 29 10.6L24.2 14.5L20.5 11.3Z"/><path d="M5.5 9.3L7.6 7.3L12.6 11.6L13.6 15.6L9.6 14.4Z"/><path d="M18.2 22.8L19.9 21.1L26.6 28.2A1.3 1.3 0 0 1 24.8 30Z"/></g>
<text x="2027" y="1506.3" font-family="'Liberation Sans', sans-serif" font-size="21" fill="#cccccc" font-weight="400" textLength="88" lengthAdjust="spacingAndGlyphs" xml:space="preserve">行 2、列 1</text>
<text x="2144" y="1506.3" font-family="'Liberation Sans', sans-serif" font-size="21" fill="#cccccc" font-weight="400" textLength="84.5" lengthAdjust="spacingAndGlyphs" xml:space="preserve">スペース: 4</text>
<g stroke="#cccccc" stroke-width="1.8" fill="none" stroke-linejoin="round"><path d="M2514 1503.5H2532C2529.5 1501 2529 1498 2529 1494A6 6 0 0 0 2517 1494C2517 1498 2516.5 1501 2514 1503.5Z"/><path d="M2520 1506.5A3 3 0 0 0 2526 1506.5"/></g></svg></body></html>
